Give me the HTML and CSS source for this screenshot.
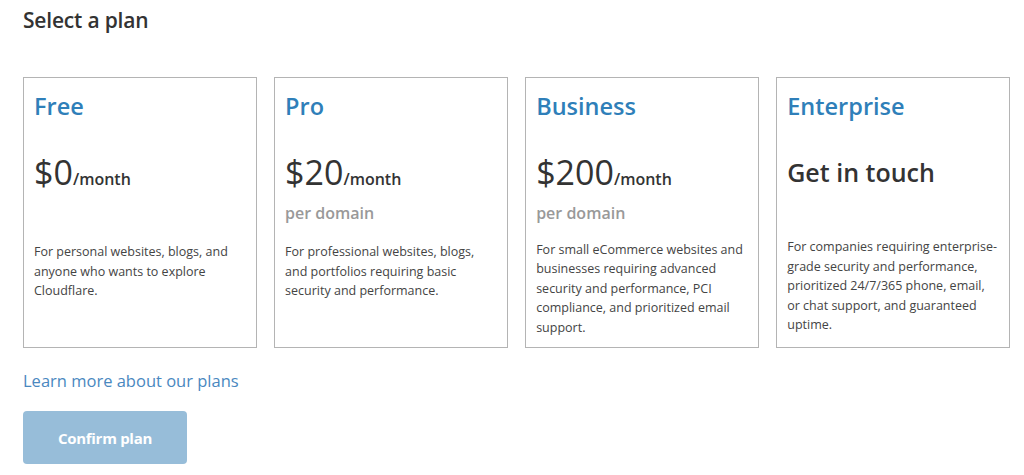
FILE: index.html
```html
<!DOCTYPE html>
<html>
<head>
<meta charset="utf-8">
<link rel="stylesheet" href="styles.css">
</head>
<body>
<div class="page">
  <h1 class="heading">Select a plan</h1>
  <div class="plans">
    <div class="card">
      <div class="card-head">
        <h2 class="plan-name">Free</h2>
        <div class="price"><span class="amount">$0</span><span class="period">/month</span></div>
      </div>
      <p class="desc">For personal websites, blogs, and anyone who wants to explore Cloudflare.</p>
    </div>
    <div class="card">
      <div class="card-head">
        <h2 class="plan-name">Pro</h2>
        <div class="price"><span class="amount">$20</span><span class="period">/month</span></div>
        <div class="per">per domain</div>
      </div>
      <p class="desc">For professional websites, blogs, and portfolios requiring basic security and performance.</p>
    </div>
    <div class="card">
      <div class="card-head">
        <h2 class="plan-name">Business</h2>
        <div class="price"><span class="amount">$200</span><span class="period">/month</span></div>
        <div class="per">per domain</div>
      </div>
      <p class="desc">For small eCommerce websites and businesses requiring advanced security and performance, PCI compliance, and prioritized email support.</p>
    </div>
    <div class="card">
      <div class="card-head card-head-ent">
        <h2 class="plan-name">Enterprise</h2>
        <div class="touch">Get in touch</div>
      </div>
      <p class="desc">For companies requiring enterprise-grade security and performance, prioritized 24/7/365 phone, email, or chat support, and guaranteed uptime.</p>
    </div>
  </div>
  <a class="learn" href="#">Learn more about our plans</a>
  <button class="confirm" type="button">Confirm plan</button>
</div>
</body>
</html>
```

FILE: styles.css
```css
* { box-sizing: border-box; }
html, body { margin: 0; padding: 0; background: #fff; }
body {
  font-family: "Open Sans", "Noto Sans", sans-serif;
  color: #333;
}
.page {
  padding: 5px 0 0 23px;
  display: flex;
  flex-direction: column;
  align-items: flex-start;
}
.heading {
  margin: 0;
  font-size: 21px;
  font-weight: 600;
  line-height: 30px;
  color: #333;
  letter-spacing: -0.2px;
}
.plans {
  margin-top: 42px;
  display: grid;
  grid-template-columns: repeat(4, 1fr);
  column-gap: 17.33px;
  width: 987px;
}
.card {
  border: 1px solid #b4b4b4;
  height: 271px;
  padding: 12px 10px 10px 10px;
  display: flex;
  flex-direction: column;
}
.card-head {
  height: 152px;
}
.card-head-ent { height: 147px; }
.plan-name {
  margin: 0;
  font-size: 23.5px;
  font-weight: 600;
  line-height: 32px;
  color: #2f7fb9;
}
.price {
  margin-top: 28px;
  line-height: 44px;
  white-space: nowrap;
}
.amount {
  font-size: 34px;
  color: #333;
}
.period {
  font-size: 16px;
  font-weight: 600;
  color: #333;
}
.per {
  font-size: 16px;
  font-weight: 600;
  line-height: 24px;
  color: #999;
}
.touch {
  margin-top: 32px;
  font-size: 25px;
  font-weight: 600;
  line-height: 36px;
  color: #333;
}
.desc {
  margin: 0;
  font-size: 12.5px;
  line-height: 19.5px;
  color: #444;
}
.learn {
  margin-top: 22px;
  font-size: 16.5px;
  line-height: 22px;
  color: #4a88bf;
  text-decoration: none;
}
.confirm {
  margin-top: 19px;
  width: 164px;
  height: 53px;
  border: none;
  border-radius: 4px;
  background: #97bdd9;
  color: #fff;
  font-family: "Open Sans", "Noto Sans", sans-serif;
  font-size: 15px;
  font-weight: 700;
  letter-spacing: -0.3px;
  padding: 0;
}
```
